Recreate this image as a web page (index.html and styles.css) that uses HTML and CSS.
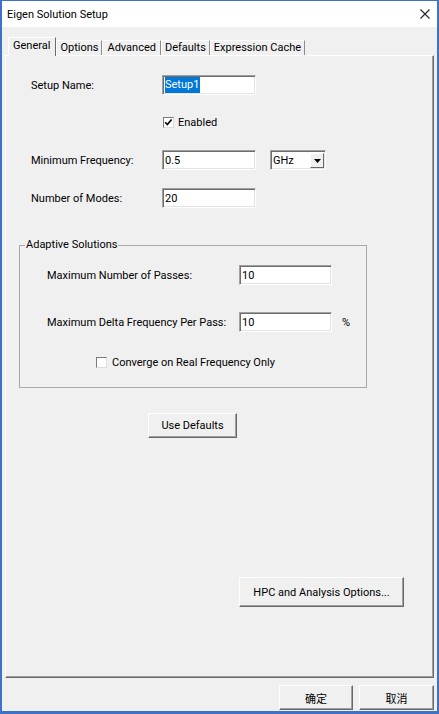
FILE: index.html
```html
<!DOCTYPE html>
<html>
<head>
<meta charset="utf-8">
<title>Eigen Solution Setup</title>
<link rel="stylesheet" href="styles.css">
</head>
<body>
<div class="window">
  <div class="titlebar">
    <span class="title">Eigen Solution Setup</span>
    <svg class="close" width="10" height="10" viewBox="0 0 10 10"><path d="M0.5 0.5 L9.5 9.5 M9.5 0.5 L0.5 9.5" stroke="#222" stroke-width="1.1" fill="none"/></svg>
  </div>
  <div class="body">
    <div class="tabs">
      <div class="tab active">General</div>
      <div class="tab">Options</div>
      <div class="tab wide">Advanced</div>
      <div class="tab">Defaults</div>
      <div class="tab">Expression Cache</div>
    </div>
    <div class="panel">
      <div class="form">
        <div class="row r1">
          <span class="lbl">Setup Name:</span>
          <div class="input w94"><span class="sel">Setup1</span></div>
        </div>
        <div class="row r2">
          <span class="lbl"></span>
          <span class="cb checked"><svg width="9" height="9" viewBox="0 0 9 9"><path d="M1.2 4.2 L3.4 6.6 L7.6 1.6" stroke="#000" stroke-width="1.6" fill="none"/></svg></span>
          <span class="cbtext">Enabled</span>
        </div>
        <div class="row r3">
          <span class="lbl">Minimum Frequency:</span>
          <div class="input w94">0.5</div>
          <div class="combo">
            <span class="combo-val">GHz</span>
            <span class="combo-btn"><svg width="7" height="4" viewBox="0 0 7 4"><path d="M0 0 H7 L3.5 4 Z" fill="#000"/></svg></span>
          </div>
        </div>
        <div class="row r4">
          <span class="lbl">Number of Modes:</span>
          <div class="input w94">20</div>
        </div>
      </div>
      <div class="group">
        <div class="group-title">Adaptive Solutions</div>
        <div class="row g1">
          <span class="glbl">Maximum Number of Passes:</span>
          <div class="input w93">10</div>
        </div>
        <div class="row g2">
          <span class="glbl">Maximum Delta Frequency Per Pass:</span>
          <div class="input w93">10</div>
          <span class="unit">%</span>
        </div>
        <div class="row g3">
          <span class="cb"></span>
          <span class="cbtext">Converge on Real Frequency Only</span>
        </div>
      </div>
      <div class="btn defaults">Use Defaults</div>
      <div class="btn hpc">HPC and Analysis Options...</div>
    </div>
    <div class="footer">
      <div class="btn ok">确定</div>
      <div class="btn cancel">取消</div>
    </div>
  </div>
</div>
</body>
</html>
```

FILE: styles.css
```css
* { box-sizing: border-box; }
html, body { margin: 0; padding: 0; }
body {
  font-family: Roboto, "Liberation Sans", "Noto Sans CJK SC", sans-serif;
  font-size: 11px;
  color: #000;
  background: #fff;
}
.window {
  width: 439px;
  height: 714px;
  border: 2px solid #3f72c6;
  border-top-width: 1px;
  border-bottom-width: 3px;
  display: flex;
  flex-direction: column;
  background: #f0f0f0;
}
.titlebar {
  height: 26px;
  flex: none;
  background: #fff;
  display: flex;
  align-items: center;
  justify-content: space-between;
  padding: 0 7px 0 5px;
}
.title { font-size: 11px; color: #000; }
.close { display: block; }

.body {
  flex: 1;
  display: flex;
  flex-direction: column;
  padding: 10px 3px 0 3px;
}
.tabs {
  display: flex;
  align-items: flex-end;
  height: 18px;
  margin-left: 3px;
  flex: none;
}
.tab {
  height: 15px;
  line-height: 14px;
  padding: 0 3px;
  border-left: 1px solid #fff;
  border-top: 1px solid #fff;
  border-right: 1px solid #8c8c8c;
  color: #000;
  white-space: nowrap;
}
.tab.wide { padding: 0 4px; }
.tab.active {
  height: 19px;
  line-height: 16px;
  margin-bottom: -1px;
  background: #f0f0f0;
  position: relative;
  z-index: 1;
  padding: 0 5px 0 4px;
  border-right: 1px solid #696969;
}
.panel {
  flex: none;
  height: 623px;
  border: 1px solid;
  border-color: #fff #696969 #696969 #fff;
  box-shadow: inset -1px -1px 0 #a0a0a0;
  display: flex;
  flex-direction: column;
}
.form { padding-left: 25px; }
.row {
  display: flex;
  align-items: center;
  height: 20px;
}
.r1 { margin-top: 19px; }
.r2 { margin-top: 17px; }
.r3 { margin-top: 18px; }
.r4 { margin-top: 18px; }
.lbl { width: 131px; flex: none; }
.input {
  height: 20px;
  background: #fff;
  border-top: 1px solid #a0a0a0;
  border-left: 1px solid #a0a0a0;
  border-right: 1px solid #fff;
  border-bottom: 1px solid #fff;
  box-shadow: inset 1px 1px 0 #6d6d6d, inset -1px -1px 0 #e3e3e3;
  padding: 0 0 0 2px;
  line-height: 17px;
  display: flex;
  align-items: center;
  flex: none;
}
.w94 { width: 94px; }
.w93 { width: 93px; }
.sel {
  background: #0078d7;
  color: #fff;
  line-height: 16px;
  padding: 0 1px 0 0;
}
.cb {
  width: 11px;
  height: 11px;
  flex: none;
  background: #fff;
  border-top: 1px solid #7a7a7a;
  border-left: 1px solid #7a7a7a;
  border-right: 1px solid #dcdcdc;
  border-bottom: 1px solid #dcdcdc;
  display: flex;
  align-items: center;
  justify-content: center;
  margin-left: 1px;
}
.cbtext { margin-left: 4px; }
.combo {
  margin-left: 14px;
  width: 56px;
  height: 20px;
  background: #fff;
  border-top: 1px solid #a0a0a0;
  border-left: 1px solid #a0a0a0;
  border-right: 1px solid #fff;
  border-bottom: 1px solid #fff;
  box-shadow: inset 1px 1px 0 #6d6d6d, inset -1px -1px 0 #e3e3e3;
  display: flex;
  align-items: stretch;
  padding: 2px 1px 1px 2px;
}
.combo-val { flex: 1; display: flex; align-items: center; }
.combo-btn {
  width: 14px;
  background: #f0f0f0;
  border-top: 1px solid #fff;
  border-left: 1px solid #fff;
  border-right: 1px solid #696969;
  border-bottom: 1px solid #696969;
  display: flex;
  align-items: center;
  justify-content: center;
}

.group {
  margin: 37px 0 0 13px;
  width: 348px;
  border: 1px solid #a8a8a8;
  padding-bottom: 15px;
}
.group-title {
  width: max-content;
  margin: -8px 0 0 5px;
  padding: 0 1px;
  height: 14px;
  line-height: 14px;
  background: #f0f0f0;
}
.group .row { padding-left: 27px; }
.glbl { width: 192px; flex: none; }
.g1 { margin-top: 13px; }
.g2 { margin-top: 27px; }
.g3 { margin-top: 20px; }
.g3 .cb { margin-left: 49px; }
.g3 .cbtext { margin-left: 5px; }
.unit { margin-left: 10px; }

.btn {
  background: #f0f0f0;
  border-top: 1px solid #fff;
  border-left: 1px solid #fff;
  border-right: 1px solid #696969;
  border-bottom: 1px solid #696969;
  box-shadow: inset -1px -1px 0 #a0a0a0;
  display: flex;
  align-items: center;
  justify-content: center;
  flex: none;
}
.defaults {
  align-self: flex-start;
  margin: 25px 0 0 142px;
  width: 89px;
  height: 25px;
}
.hpc {
  align-self: flex-end;
  margin: auto 29px 70px 0;
  width: 165px;
  height: 30px;
}
.footer {
  display: flex;
  justify-content: flex-end;
  gap: 6px;
  margin-top: 7px;
}
.ok { width: 74px; height: 25px; }
.cancel { width: 75px; height: 25px; }
```
